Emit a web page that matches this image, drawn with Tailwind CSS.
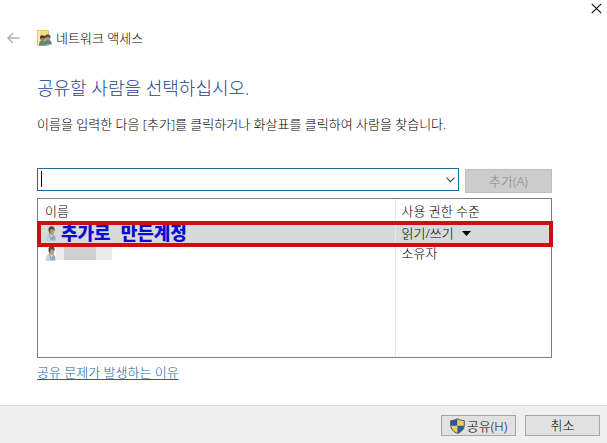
<!DOCTYPE html>
<html lang="ko">
<head>
<meta charset="utf-8">
<meta name="viewport" content="width=device-width, initial-scale=1">
<title>네트워크 액세스</title>
<script src="https://cdn.jsdelivr.net/npm/@tailwindcss/browser@4"></script>
</head>
<body class="flex min-h-screen flex-col bg-white font-['Open_Sans','Noto_Sans_CJK_KR',sans-serif] text-[13px] leading-5 font-light text-black">
<svg class="hidden" aria-hidden="true">
  <symbol id="user" viewBox="0 0 10 15">
    <path d="M.3 14.500C0 11 1 9 3 8h3.500C9 9 9.700 11 9.400 14.500z" fill="#8fabc0"/>
    <path d="M.3 14.500C0 11 1 9 3 8l1.500 6.500z" fill="#c3d5e0"/>
    <path d="M4 8.500h3l-1.500 3z" fill="#dfe9ee"/>
    <ellipse cx="5.500" cy="5" rx="2.800" ry="3.900" fill="#c19a7a"/>
    <path d="M3 6C1.800 2.500 3 .3 5.500.3S9.200 2 8.500 5.200C8 3.700 7 3 5.200 3.200 4.200 3.700 4.200 5 4.300 7.500z" fill="#594b40"/>
  </symbol>
</svg>

<header>
  <div class="flex h-4 justify-end pr-[5px]">
    <button type="button" aria-label="닫기" class="flex w-3 items-center justify-center">
      <svg class="h-[11px] w-[11px]" viewBox="0 0 11 11" fill="none" stroke="#111" stroke-width="1.2"><path d="M.8.8l9.400 9.400M10.200.8L.8 10.200"/></svg>
    </button>
  </div>
  <div class="flex h-11 items-center pl-[7px]">
    <button type="button" aria-label="뒤로" disabled class="mr-[17px] flex">
      <svg class="h-3 w-[13px]" viewBox="0 0 13 12" fill="none" stroke="#b4b4b4" stroke-width="1.500"><path d="M12.500 6H1M6 1L1 6l5 5"/></svg>
    </button>
    <svg class="mr-1 h-4 w-[15px]" viewBox="0 0 15 16" aria-hidden="true">
      <path d="M.5.5h11V15.500H.5z" fill="#f8dd80" stroke="#e6c560"/>
      <path d="M1 1h1.500v14H1z" fill="#fbeeb6"/>
      <path d="M7 14.500c0-3.500 1-4.500 4-4.500s3.700 1.500 3.700 4.500z" fill="#5286a0"/>
      <circle cx="10.800" cy="8" r="2.500" fill="#b98a67"/>
      <path d="M8.200 8c-.6-2.800.8-3.500 2.600-3.500s3.200.8 2.600 3.500c-1-1.200-3-1.500-5.200 0z" fill="#5b4a3c"/>
      <path d="M2 15.500c0-3.500 1-4.800 3.500-4.800s3.700 1.300 3.700 4.800z" fill="#4f9181"/>
      <circle cx="5.600" cy="8.800" r="2.400" fill="#a97a58"/>
      <path d="M3.100 8.800c-.6-2.800.8-3.500 2.500-3.500s3 .8 2.500 3.500c-1-1.200-3-1.500-5 0z" fill="#3c3a31"/>
    </svg>
    <h1>네트워크 액세스</h1>
  </div>
</header>

<main class="flex flex-1 flex-col pr-[55px] pl-[37px] pt-4">
  <h2 class="text-[18px] leading-6 font-light text-[#1c3f94]">공유할 사람을 선택하십시오.</h2>
  <p class="mt-[14px]">이름을 입력한 다음 [추가]를 클릭하거나 화살표를 클릭하여 사람을 찾습니다.</p>

  <form class="mt-[34px] flex gap-[6px]">
    <div class="relative min-w-0 flex-1">
      <input type="text" role="combobox" aria-expanded="false" aria-label="추가할 사람" class="block h-[23px] w-full border border-[#1a6e9e] bg-white pr-5 pl-1 outline-none">
      <span class="absolute top-[3px] left-1 h-4 w-px bg-black"></span>
      <svg class="pointer-events-none absolute top-[9px] right-1 h-[6px] w-[9px]" viewBox="0 0 9 6" fill="none" stroke="#444" stroke-width="1.100"><path d="M.5.7l4 4 4-4"/></svg>
    </div>
    <button type="button" disabled class="mt-px h-6 w-[87px] border border-[#bfbfbf] bg-[#cccccc] font-light text-[#858585]">추가(A)</button>
  </form>

  <div class="relative mt-[5px] h-40 border border-[#7b7f85]">
    <table class="h-full w-full table-fixed border-collapse text-left">
      <thead>
        <tr class="h-[23px]">
          <th class="border-r border-[#e8e8e8] py-0 pl-[7px] font-light">이름</th>
          <th class="w-[156px] py-0 pl-[6px] font-light">사용 권한 수준</th>
        </tr>
      </thead>
      <tbody>
        <tr class="h-[22px] bg-[#d9d9d9]">
          <td class="border-r border-[#e8e8e8] py-0 pl-2">
            <div class="flex h-[22px] items-center">
              <svg class="mr-[5px] h-[15px] w-[10px]" aria-hidden="true"><use href="#user"/></svg>
              <span class="flex gap-[10px] text-[18px] leading-[22px] font-black text-[#0c0cd4]"><span>추가로</span><span>만든계정</span></span>
            </div>
          </td>
          <td class="py-0 pl-[6px]">
            <button type="button" class="flex items-center gap-2">읽기/쓰기
              <svg class="h-[5px] w-[9px]" viewBox="0 0 9 5" aria-hidden="true"><path d="M0 0h9L4.500 5z"/></svg>
            </button>
          </td>
        </tr>
        <tr class="h-[18px]">
          <td class="border-r border-[#e8e8e8] py-0 pl-2">
            <div class="flex h-[18px] items-center">
              <svg class="h-[15px] w-[10px]" aria-hidden="true"><use href="#user"/></svg>
              <span class="flex h-[14px]" aria-hidden="true">
                <span class="w-2 bg-[#ededed]"></span><span class="w-8 bg-[#cfcfcf]"></span><span class="w-4 bg-[#ebebeb]"></span>
              </span>
            </div>
          </td>
          <td class="py-0 pl-[6px] leading-[18px]">소유자</td>
        </tr>
        <tr><td class="border-r border-[#e8e8e8]"></td><td></td></tr>
      </tbody>
    </table>
    <div class="pointer-events-none absolute top-[22px] -right-[2px] -left-px h-[26px] border-4 border-[#d40c0c]"></div>
  </div>
  <a href="#" class="mt-1 self-start text-[#0f66a8] underline underline-offset-2">공유 문제가 발생하는 이유</a>
</main>

<footer class="flex h-[38px] justify-end gap-[9px] border-t border-[#dcdcdc] bg-[#efefef] pt-[9px] pr-[7px]">
  <button type="button" class="flex h-[21px] w-[75px] items-center justify-center gap-[2px] border border-[#a6a6a6] bg-[#e1e1e1]">
    <svg class="h-4 w-[15px]" viewBox="0 0 15 16" aria-hidden="true">
      <path d="M7.500.5C5.500 2 3 2.600.7 2.600V7c0 4 3 7 6.800 8.500z" fill="#1d5e9c"/>
      <path d="M7.500.5c2 1.500 4.500 2.100 6.800 2.100V7c0 4-3 7-6.800 8.500z" fill="#f4c95d"/>
      <path d="M.8 7.800h6.700v7.700C3.800 14 1.200 11.500.8 7.800z" fill="#f4c95d"/>
      <path d="M7.500 7.800h6.700c-.4 3.700-3 6.200-6.700 7.700z" fill="#1d5e9c"/>
      <path d="M7.500.6c2 1.500 4.500 2 6.800 2V7c0 4-3 7-6.800 8.400C3.700 14 .7 11 .7 7V2.600c2.300 0 4.800-.5 6.800-2z" fill="none" stroke="#4b5966"/>
    </svg>
    <span>공유(H)</span>
  </button>
  <button type="button" class="h-[21px] w-[75px] border border-[#a6a6a6] bg-[#e1e1e1] leading-[19px]">취소</button>
</footer>
</body>
</html>
